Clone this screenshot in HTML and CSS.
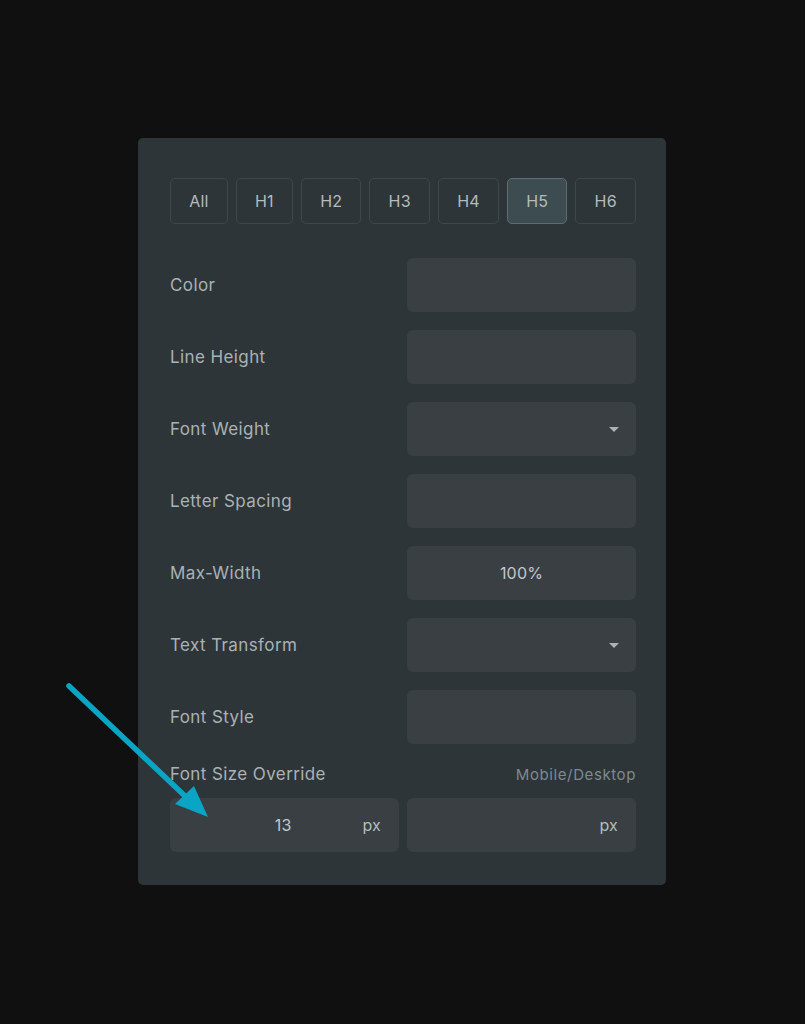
FILE: index.html
```html
<!DOCTYPE html>
<html>
<head>
<meta charset="utf-8">
<link rel="stylesheet" href="styles.css">
</head>
<body>
<div class="page">
  <div class="panel">
    <div class="tabs">
      <div class="tab">All</div>
      <div class="tab">H1</div>
      <div class="tab">H2</div>
      <div class="tab">H3</div>
      <div class="tab">H4</div>
      <div class="tab active">H5</div>
      <div class="tab">H6</div>
    </div>
    <div class="rows">
      <div class="row"><span class="label">Color</span><div class="field"></div></div>
      <div class="row"><span class="label">Line Height</span><div class="field"></div></div>
      <div class="row"><span class="label">Font Weight</span><div class="field select"><span class="caret"></span></div></div>
      <div class="row"><span class="label">Letter Spacing</span><div class="field"></div></div>
      <div class="row"><span class="label">Max-Width</span><div class="field center">100%</div></div>
      <div class="row"><span class="label">Text Transform</span><div class="field select"><span class="caret"></span></div></div>
      <div class="row"><span class="label">Font Style</span><div class="field"></div></div>
    </div>
    <div class="override">
      <div class="override-head"><span class="label">Font Size Override</span><span class="hint">Mobile/Desktop</span></div>
      <div class="pair">
        <div class="field unit"><span class="val">13</span><span class="px">px</span></div>
        <div class="field unit"><span class="val"></span><span class="px">px</span></div>
      </div>
    </div>
  </div>
  <svg class="arrow" width="160" height="150" viewBox="0 0 160 150">
    <line x1="11" y1="8" x2="128" y2="119" stroke="#0aa4c4" stroke-width="5.5" stroke-linecap="round"/>
    <polygon points="150,139 117,126 136,108" fill="#0aa4c4"/>
  </svg>
</div>
</body>
</html>
```
FILE: styles.css
```css
html, body {
  margin: 0;
  padding: 0;
  background: #101010;
}
body {
  font-family: Inter, Lato, "Noto Sans", sans-serif;
  width: 805px;
  height: 1024px;
  overflow: hidden;
}
.page {
  position: relative;
  padding: 138px 0 0 138px;
}
.panel {
  width: 528px;
  box-sizing: border-box;
  background: #2d3538;
  border-radius: 5px;
  padding: 40px 30px 33px 32px;
}
.tabs {
  display: flex;
  gap: 8px;
}
.tab {
  flex: 1 1 auto;
  height: 46px;
  box-sizing: border-box;
  border: 1.5px solid #3c4849;
  border-radius: 5px;
  display: flex;
  align-items: center;
  justify-content: center;
  color: #b4bcbe;
  font-size: 16px;
  letter-spacing: 0.2px;
}
.tab.active {
  background: #3c4c50;
  border-color: #5d6d70;
}
.rows {
  margin-top: 34px;
  display: flex;
  flex-direction: column;
  gap: 18px;
}
.row {
  display: flex;
  align-items: center;
  justify-content: space-between;
}
.label {
  color: #aab2b5;
  font-size: 17px;
  letter-spacing: 0.4px;
}
.field {
  width: 229px;
  height: 54px;
  background: #393f43;
  border-radius: 6px;
  box-sizing: border-box;
  display: flex;
  align-items: center;
  color: #c2c8ca;
  font-size: 16px;
  letter-spacing: 0.2px;
}
.field.center {
  justify-content: center;
}
.field.select {
  justify-content: flex-end;
  padding-right: 17px;
}
.caret {
  width: 0;
  height: 0;
  border-left: 5px solid transparent;
  border-right: 5px solid transparent;
  border-top: 5px solid #aab2b5;
}
.override {
  margin-top: 19px;
}
.override-head {
  display: flex;
  justify-content: space-between;
  align-items: center;
  height: 22px;
}
.hint {
  color: #7f8a8d;
  font-size: 15px;
  letter-spacing: 0.6px;
}
.pair {
  margin-top: 13px;
  display: flex;
  gap: 8px;
}
.pair .field {
  width: auto;
  flex: 1;
  padding: 0 18px 0 18px;
}
.unit .val {
  flex: 1;
  text-align: center;
  padding-left: 16px;
}
.unit .px {
  color: #b4bcbe;
}
.arrow {
  position: absolute;
  left: 58px;
  top: 678px;
}
```
